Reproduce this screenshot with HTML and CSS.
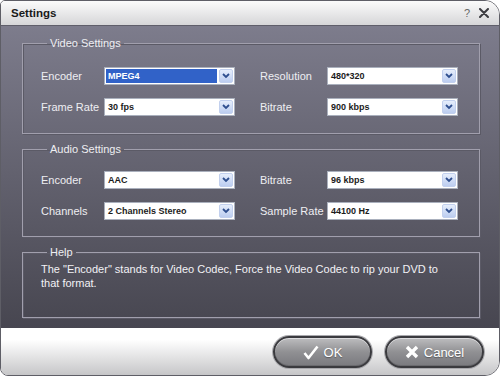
FILE: index.html
```html
<!DOCTYPE html>
<html>
<head>
  <title>Settings</title>
  <link rel="stylesheet" href="styles.css">
</head>
<body>
  <div class="window">
    <div class="titlebar">
      <span class="title">Settings</span>
      <div class="title-controls">
        <span class="help-btn">?</span>
        <svg class="close-btn" width="10" height="10" viewBox="0 0 10 10">
          <path d="M1 1 L9 9 M9 1 L1 9" stroke="#3c3c40" stroke-width="2" stroke-linecap="round"/>
        </svg>
      </div>
    </div>

    <div class="content">
      <fieldset class="group video">
        <legend>Video Settings</legend>
        <div class="fields">
          <div class="field">
            <label>Encoder</label>
            <div class="combo focused">
              <span class="combo-text"><span class="selected">MPEG4</span></span>
              <span class="combo-arrow"><svg width="8" height="6" viewBox="0 0 8 6"><path d="M1 1 L4 4 L7 1" fill="none" stroke="#2f4f8f" stroke-width="1.8"/></svg></span>
            </div>
          </div>
          <div class="field wide">
            <label>Resolution</label>
            <div class="combo">
              <span class="combo-text">480*320</span>
              <span class="combo-arrow"><svg width="8" height="6" viewBox="0 0 8 6"><path d="M1 1 L4 4 L7 1" fill="none" stroke="#2f4f8f" stroke-width="1.8"/></svg></span>
            </div>
          </div>
          <div class="field">
            <label>Frame Rate</label>
            <div class="combo">
              <span class="combo-text">30 fps</span>
              <span class="combo-arrow"><svg width="8" height="6" viewBox="0 0 8 6"><path d="M1 1 L4 4 L7 1" fill="none" stroke="#2f4f8f" stroke-width="1.8"/></svg></span>
            </div>
          </div>
          <div class="field wide">
            <label>Bitrate</label>
            <div class="combo">
              <span class="combo-text">900 kbps</span>
              <span class="combo-arrow"><svg width="8" height="6" viewBox="0 0 8 6"><path d="M1 1 L4 4 L7 1" fill="none" stroke="#2f4f8f" stroke-width="1.8"/></svg></span>
            </div>
          </div>
        </div>
      </fieldset>

      <fieldset class="group audio">
        <legend>Audio Settings</legend>
        <div class="fields">
          <div class="field">
            <label>Encoder</label>
            <div class="combo">
              <span class="combo-text">AAC</span>
              <span class="combo-arrow"><svg width="8" height="6" viewBox="0 0 8 6"><path d="M1 1 L4 4 L7 1" fill="none" stroke="#2f4f8f" stroke-width="1.8"/></svg></span>
            </div>
          </div>
          <div class="field wide">
            <label>Bitrate</label>
            <div class="combo">
              <span class="combo-text">96 kbps</span>
              <span class="combo-arrow"><svg width="8" height="6" viewBox="0 0 8 6"><path d="M1 1 L4 4 L7 1" fill="none" stroke="#2f4f8f" stroke-width="1.8"/></svg></span>
            </div>
          </div>
          <div class="field">
            <label>Channels</label>
            <div class="combo">
              <span class="combo-text">2 Channels Stereo</span>
              <span class="combo-arrow"><svg width="8" height="6" viewBox="0 0 8 6"><path d="M1 1 L4 4 L7 1" fill="none" stroke="#2f4f8f" stroke-width="1.8"/></svg></span>
            </div>
          </div>
          <div class="field wide">
            <label>Sample Rate</label>
            <div class="combo">
              <span class="combo-text">44100 Hz</span>
              <span class="combo-arrow"><svg width="8" height="6" viewBox="0 0 8 6"><path d="M1 1 L4 4 L7 1" fill="none" stroke="#2f4f8f" stroke-width="1.8"/></svg></span>
            </div>
          </div>
        </div>
      </fieldset>

      <fieldset class="group help">
        <legend>Help</legend>
        <p>The "Encoder" stands for Video Codec, Force the Video Codec to rip your DVD to that format.</p>
      </fieldset>
    </div>

    <div class="footer">
      <button class="btn">
        <svg width="16" height="15" viewBox="0 0 16 15"><path d="M1.5 8 L5.5 13 L14.5 1.5" fill="none" stroke="#fff" stroke-width="2.6" stroke-linejoin="round"/></svg>
        OK
      </button>
      <button class="btn">
        <svg width="14" height="14" viewBox="0 0 14 14"><path d="M2 2 L12 12 M12 2 L2 12" stroke="#fff" stroke-width="3.4"/></svg>
        Cancel
      </button>
    </div>
  </div>
</body>
</html>
```

FILE: styles.css
```css
body {
  margin: 0;
  background: #ffffff;
  font-family: 'Liberation Sans', Arial, sans-serif;
}
.window {
  width: 500px;
  height: 376px;
  box-sizing: border-box;
  border: 1px solid #5e5e66;
  border-radius: 5px 15px 15px 8px;
  overflow: hidden;
  display: flex;
  flex-direction: column;
}
.titlebar {
  height: 24px;
  border-bottom: 1px solid #5f5e6a;
  background: linear-gradient(#fbfbfb, #d6d6d8);
  display: flex;
  align-items: center;
  justify-content: space-between;
  padding: 0 10px 0 10px;
}
.title {
  font-size: 11.5px;
  font-weight: bold;
  color: #1a1a1a;
}
.title-controls {
  display: flex;
  align-items: center;
  gap: 9px;
}
.help-btn {
  font-size: 11px;
  color: #666;
}
.content {
  height: 302px;
  box-sizing: border-box;
  padding: 11px 19px 0 21px;
  background: linear-gradient(#7d7c8c, #474650);
}
.group {
  margin: 0;
  border: 1px solid #a19fad;
  box-shadow: inset 1px 1px 0 #5b5a66, 1px 1px 0 #5b5a66;
  padding: 17px 19px 17px 18px;
  color: #eeeef2;
  font-size: 11px;
}
.group legend {
  margin-left: 6px;
  padding: 0 3px;
  line-height: 13px;
  color: #eeeef2;
}
.group.audio {
  margin-top: 9px;
  padding-top: 15px;
  padding-bottom: 16px;
}
.group.help {
  margin-top: 9px;
  height: 72px;
  box-sizing: border-box;
  padding: 3px 20px 0 18px;
}
.help p {
  margin: 0;
  line-height: 14px;
  color: #f2f2f6;
}
.fields {
  display: grid;
  grid-template-columns: 194px 198px;
  column-gap: 25px;
  row-gap: 13px;
}
.field {
  display: flex;
  align-items: center;
}
.field label {
  flex: 0 0 63px;
}
.field.wide label {
  flex-basis: 67px;
}
.combo {
  width: 131px;
  height: 18px;
  box-sizing: border-box;
  border: 1px solid #aab0bd;
  background: #fff;
  display: flex;
  align-items: stretch;
  padding: 1px;
}
.combo-text {
  flex: 1;
  display: flex;
  align-items: center;
  padding-left: 2px;
  font-size: 9px;
  font-weight: bold;
  color: #1c1c1c;
  overflow: hidden;
  white-space: nowrap;
}
.combo.focused .combo-text {
  padding-left: 0;
  margin-right: 2px;
}
.selected {
  flex: 1;
  align-self: stretch;
  display: flex;
  align-items: center;
  padding-left: 2px;
  background: #3162c8;
  color: #fff;
  outline: 1px dotted #1a1a1a;
}
.combo-arrow {
  width: 14px;
  display: flex;
  align-items: center;
  justify-content: center;
  box-sizing: border-box;
  border: 1px solid #c2d0ee;
  border-radius: 2px;
  background: linear-gradient(#e6eefc, #bccdf0);
}
.footer {
  flex: 1;
  background: linear-gradient(#ffffff 25%, #c6c6c8);
  display: flex;
  justify-content: flex-end;
  align-items: flex-start;
  gap: 13px;
  padding: 8px 15px 0 0;
}
.btn {
  width: 99px;
  height: 32px;
  box-sizing: border-box;
  border: 2px solid #3a3a3e;
  border-radius: 16px;
  background: linear-gradient(#bdbdbf, #909093 50%, #7a7a7e);
  box-shadow: 0 0 0 1px #a9a9ad, inset 0 1px 0 #dcdcde, inset 0 -1px 0 #6a6a6e;
  color: #fff;
  font-family: 'Liberation Sans', Arial, sans-serif;
  font-size: 13px;
  display: flex;
  align-items: center;
  justify-content: center;
  gap: 5px;
  padding: 0;
  text-shadow: 0 1px 1px rgba(0, 0, 0, 0.35);
}
```
